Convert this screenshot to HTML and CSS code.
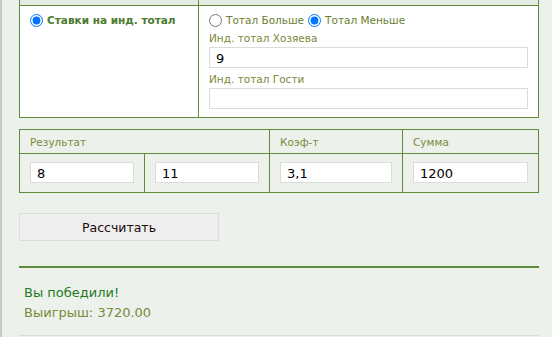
FILE: index.html
```html
<!DOCTYPE html>
<html lang="ru">
<head>
<meta charset="utf-8">
<link rel="stylesheet" href="styles.css">
</head>
<body>
<div class="page">
  <div class="panel top">
    <div class="head-cell left"></div>
    <div class="head-cell"></div>
    <div class="cell left">
      <label class="bold-radio"><input type="radio" name="bt" checked> Ставки на инд. тотал</label>
    </div>
    <div class="cell right">
      <div class="radios">
        <label><input type="radio" name="tt"> Тотал Больше</label>
        <label><input type="radio" name="tt" checked> Тотал Меньше</label>
      </div>
      <div class="lbl">Инд. тотал Хозяева</div>
      <input class="field" type="text" value="9">
      <div class="lbl">Инд. тотал Гости</div>
      <input class="field" type="text" value="">
    </div>
  </div>

  <div class="panel bottom">
    <div class="hcell span2">Результат</div>
    <div class="hcell bl">Коэф-т</div>
    <div class="hcell bl">Сумма</div>
    <div class="bcell"><input class="field" type="text" value="8"></div>
    <div class="bcell bl"><input class="field" type="text" value="11"></div>
    <div class="bcell bl"><input class="field" type="text" value="3,1"></div>
    <div class="bcell bl"><input class="field" type="text" value="1200"></div>
  </div>

  <button class="calc" type="button">Рассчитать</button>

  <div class="result">
    <div class="win">Вы победили!</div>
    <div class="amount">Выигрыш: 3720.00</div>
  </div>
</div>
</body>
</html>
```

FILE: styles.css
```css
html, body {
  margin: 0;
  padding: 0;
}
body {
  background: #ecf1eb;
  border-left: 2px solid #c6cbc6;
  height: 337px;
  box-sizing: border-box;
  font-family: "DejaVu Sans", Verdana, sans-serif;
  overflow: hidden;
}
.page {
  width: 520px;
  margin-left: 17px;
}
.panel {
  border: 1px solid #5e8c3a;
  background: #fff;
  display: grid;
}
.top {
  border-top: none;
  grid-template-columns: 179px 1fr;
  grid-template-rows: 6px 111px;
}
.head-cell {
  background: #e6ebe4;
  border-bottom: 1px solid #5e8c3a;
}
.head-cell.left, .cell.left {
  border-right: 1px solid #5e8c3a;
}
.cell {
  padding: 7px 10px 0 10px;
}
.bold-radio {
  font-weight: bold;
  font-size: 10.5px;
  color: #4b7a2c;
  display: flex;
  align-items: center;
  height: 14px;
}
input[type=radio] {
  margin: 0 4px 0 0;
  width: 13px;
  height: 13px;
}
.radios {
  display: flex;
  gap: 4px;
  font-size: 10.5px;
  color: #6a7e30;
  height: 14px;
}
.radios label {
  display: flex;
  align-items: center;
}
.lbl {
  font-size: 10.5px;
  color: #7a8a3a;
  margin-top: 4px;
  height: 15px;
  line-height: 15px;
}
.field {
  display: block;
  box-sizing: border-box;
  width: 100%;
  height: 21px;
  border: 1px solid #dcdcdc;
  padding: 1px 6px 0;
  font-family: "DejaVu Sans", Verdana, sans-serif;
  font-size: 13px;
  color: #000;
  background: #fff;
  outline: none;
}
.right .field {
  margin-top: 1px;
}
.bottom {
  margin-top: 11px;
  grid-template-columns: 124px 125px 133px 1fr;
  background: transparent;
}
.hcell {
  height: 23px;
  border-bottom: 1px solid #5e8c3a;
  font-size: 10.5px;
  color: #7a8a3a;
  padding-left: 10px;
  display: flex;
  align-items: center;
}
.span2 {
  grid-column: span 2;
}
.bl {
  border-left: 1px solid #5e8c3a;
}
.bcell {
  padding: 8px 10px 9px 10px;
}
.calc {
  display: block;
  margin-top: 20px;
  width: 200px;
  height: 28px;
  background: #eeeeee;
  border: 1px solid #dcdcdc;
  font-family: "DejaVu Sans", Verdana, sans-serif;
  font-size: 12.5px;
  color: #1a0a0a;
  padding: 0;
}
.result {
  margin-top: 25px;
  border-top: 2px solid #5e8c3a;
  border-bottom: 1px solid #d8dcd8;
  padding: 15px 5px 12px;
  width: 520px;
  box-sizing: border-box;
}
.win {
  font-size: 13px;
  color: #1f7a1f;
  line-height: 20px;
}
.amount {
  font-size: 13px;
  color: #7a8a3a;
  line-height: 20px;
}
```
